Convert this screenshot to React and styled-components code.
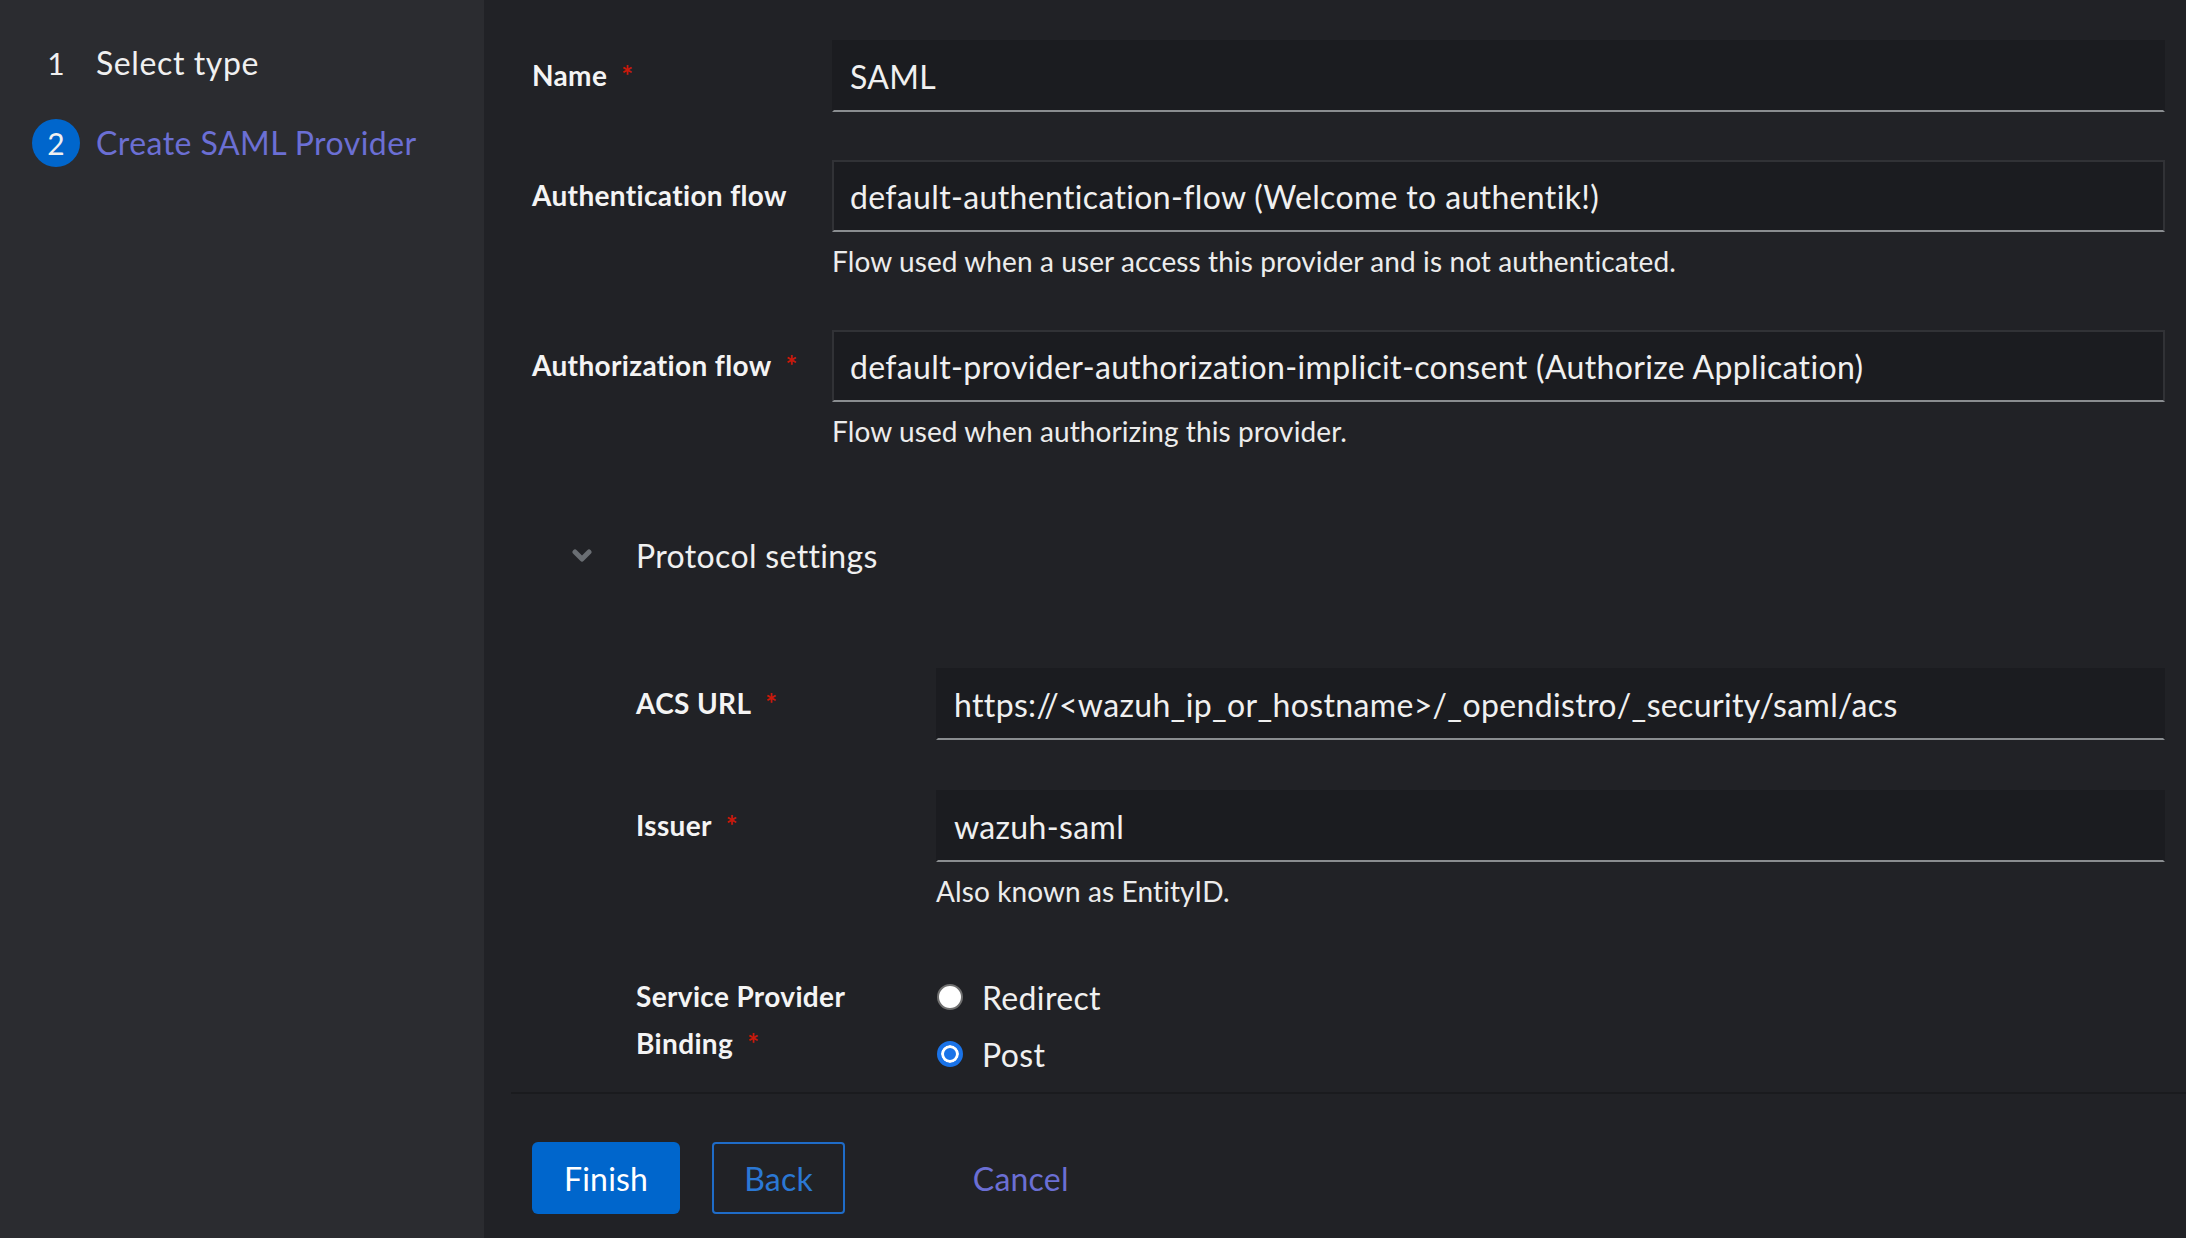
import React from "react";
import styled, { createGlobalStyle } from "styled-components";

const GlobalStyle = createGlobalStyle`
  html, body {
    margin: 0;
    padding: 0;
    background: #212226;
  }
  body {
    font-family: Lato, "Noto Sans", "Liberation Sans", sans-serif;
    color: #f0f0f0;
    letter-spacing: 0.35px;
  }
  * { box-sizing: border-box; }
`;

const Wizard = styled.div`
  display: grid;
  grid-template-columns: 484px 1fr;
  height: 1238px;
  overflow: hidden;
`;

const Nav = styled.nav`
  background: #2b2c30;
  padding-top: 39px;
`;

const NavList = styled.ol`
  list-style: none;
  margin: 0;
  padding: 0 0 0 32px;
  display: flex;
  flex-direction: column;
  gap: 32px;
`;

const NavItem = styled.li`
  display: flex;
  align-items: center;
  gap: 16px;
  height: 48px;
`;

const StepNum = styled.span`
  width: 48px;
  height: 48px;
  border-radius: 50%;
  display: flex;
  align-items: center;
  justify-content: center;
  font-size: 30px;
  letter-spacing: 0;
  color: #f0f0f0;
  background: ${(p) => (p.$current ? "#0066cc" : "transparent")};
`;

const StepLabel = styled.span`
  font-size: 32px;
  line-height: 48px;
  letter-spacing: ${(p) => (p.$current ? "0.45px" : "0.6px")};
  color: ${(p) => (p.$current ? "#6b6fd4" : "#f0f0f0")};
`;

const Main = styled.main`
  display: flex;
  flex-direction: column;
  min-width: 0;
  height: 1238px;
`;

const Body = styled.div`
  flex: 1;
  overflow: hidden;
  padding: 40px 21px 0 48px;
`;

const Form = styled.div`
  display: flex;
  flex-direction: column;
  gap: 48px;
`;

const Row = styled.div`
  display: grid;
  grid-template-columns: 300px 1fr;
  align-items: start;
`;

const Label = styled.label`
  font-size: 28px;
  font-weight: 700;
  line-height: ${(p) => p.$lh || "42px"};
  padding-top: ${(p) => p.$pt || "14px"};
  color: #f4f4f4;
`;

const Req = styled.span`
  color: #c9190b;
  margin-left: 14px;
  font-weight: 700;
`;

const Field = styled.div`
  display: flex;
  flex-direction: column;
  min-width: 0;
`;

const Input = styled.div`
  height: 72px;
  display: flex;
  align-items: center;
  padding: 0 16px;
  font-size: 32px;
  color: #f0f0f0;
  white-space: nowrap;
  overflow: hidden;
  background: #1b1c20;
  border: 2px solid ${(p) => (p.$select ? "#313236" : "transparent")};
  border-bottom-color: #8a8d90;
`;

const Helper = styled.div`
  margin-top: 8px;
  font-size: 28px;
  line-height: 42px;
  letter-spacing: 0.1px;
  color: #ececec;
`;

const Group = styled.section`
  display: flex;
  flex-direction: column;
`;

const GroupToggle = styled.div`
  display: grid;
  grid-template-columns: 104px 1fr;
  align-items: center;
  padding: 32px 0 32px;
`;

const Chevron = styled.span`
  display: flex;
  align-items: center;
  padding-left: 40px;
`;

const GroupTitle = styled.span`
  font-size: 32px;
  line-height: 48px;
  color: #f0f0f0;
`;

const GroupBody = styled.div`
  padding: 56px 0 0 104px;
  display: flex;
  flex-direction: column;
  gap: 50px;
`;

const RadioGroup = styled.div`
  display: flex;
  flex-direction: column;
  gap: 9px;
  padding-top: 11px;
`;

const RadioRow = styled.div`
  display: flex;
  align-items: center;
  gap: 19px;
  height: 48px;
  font-size: 32px;
  color: #f0f0f0;
`;

const Radio = styled.span`
  width: 26px;
  height: 26px;
  border-radius: 50%;
  margin-left: 1px;
  flex: none;
  ${(p) =>
    p.$checked
      ? `background: #1a73e8; border: 4px solid #1a73e8; box-shadow: inset 0 0 0 3px #fff;`
      : `background: #fff; border: 2px solid #6f6f6f;`}
`;

const Footer = styled.footer`
  flex: none;
  height: 146px;
  border-top: 2px solid #1a1b1e;
  margin-left: 27px;
  padding: 48px 0 0 21px;
  display: flex;
  align-items: flex-start;
  gap: 32px;
`;

const Button = styled.button`
  font-family: inherit;
  font-size: 32px;
  letter-spacing: 0.2px;
  height: 72px;
  padding: 0 32px;
  border-radius: 6px;
  cursor: pointer;
  ${(p) =>
    p.$variant === "primary"
      ? `background: #0066cc; color: #fff; border: none;`
      : p.$variant === "secondary"
      ? `background: transparent; color: #2b78d4; border: 2px solid #1f6cc8; border-radius: 4px; padding: 0 30px;`
      : `background: transparent; color: #6b6fd4; border: none; margin-left: 64px;`}
`;

const ChevronIcon = () => (
  <svg width="20" height="14" viewBox="0 0 20 14">
    <polyline
      points="3,3 10,10 17,3"
      fill="none"
      stroke="#6a6e73"
      strokeWidth="5"
      strokeLinecap="round"
      strokeLinejoin="round"
    />
  </svg>
);

export default function App() {
  return (
    <>
      <GlobalStyle />
      <Wizard>
        <Nav>
          <NavList>
            <NavItem>
              <StepNum>1</StepNum>
              <StepLabel>Select type</StepLabel>
            </NavItem>
            <NavItem>
              <StepNum $current>2</StepNum>
              <StepLabel $current>Create SAML Provider</StepLabel>
            </NavItem>
          </NavList>
        </Nav>
        <Main>
          <Body>
            <Form>
              <Row>
                <Label>
                  Name<Req>*</Req>
                </Label>
                <Field>
                  <Input>SAML</Input>
                </Field>
              </Row>
              <Row>
                <Label>Authentication flow</Label>
                <Field>
                  <Input $select>default-authentication-flow (Welcome to authentik!)</Input>
                  <Helper>Flow used when a user access this provider and is not authenticated.</Helper>
                </Field>
              </Row>
              <Row>
                <Label>
                  Authorization flow<Req>*</Req>
                </Label>
                <Field>
                  <Input $select>
                    default-provider-authorization-implicit-consent (Authorize Application)
                  </Input>
                  <Helper>Flow used when authorizing this provider.</Helper>
                </Field>
              </Row>
              <Group>
                <GroupToggle>
                  <Chevron>
                    <ChevronIcon />
                  </Chevron>
                  <GroupTitle>Protocol settings</GroupTitle>
                </GroupToggle>
                <GroupBody>
                  <Row>
                    <Label>
                      ACS URL<Req>*</Req>
                    </Label>
                    <Field>
                      <Input>https://&lt;wazuh_ip_or_hostname&gt;/_opendistro/_security/saml/acs</Input>
                    </Field>
                  </Row>
                  <Row>
                    <Label>
                      Issuer<Req>*</Req>
                    </Label>
                    <Field>
                      <Input>wazuh-saml</Input>
                      <Helper>Also known as EntityID.</Helper>
                    </Field>
                  </Row>
                  <Row>
                    <Label $lh="47px" $pt="11px">
                      Service Provider
                      <br />
                      Binding<Req>*</Req>
                    </Label>
                    <RadioGroup>
                      <RadioRow>
                        <Radio />
                        Redirect
                      </RadioRow>
                      <RadioRow>
                        <Radio $checked />
                        Post
                      </RadioRow>
                    </RadioGroup>
                  </Row>
                </GroupBody>
              </Group>
            </Form>
          </Body>
          <Footer>
            <Button $variant="primary">Finish</Button>
            <Button $variant="secondary">Back</Button>
            <Button $variant="link">Cancel</Button>
          </Footer>
        </Main>
      </Wizard>
    </>
  );
}
